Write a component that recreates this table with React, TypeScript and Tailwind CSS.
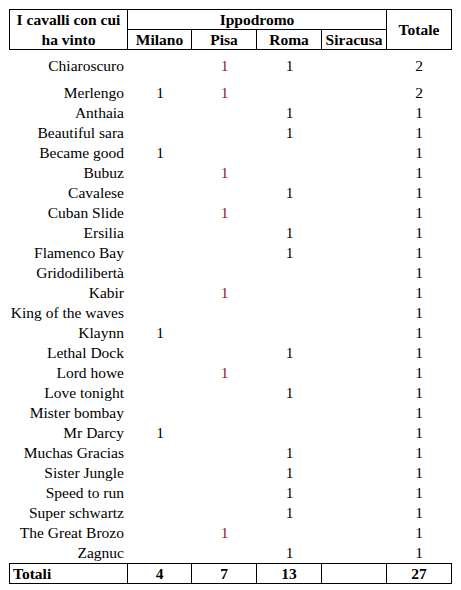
import React from "react";

type Row = [string, string, string, string, string, string];

const rows: Row[] = [
  ["Chiaroscuro", "", "1", "1", "", "2"],
  ["Merlengo", "1", "1", "", "", "2"],
  ["Anthaia", "", "", "1", "", "1"],
  ["Beautiful sara", "", "", "1", "", "1"],
  ["Became good", "1", "", "", "", "1"],
  ["Bubuz", "", "1", "", "", "1"],
  ["Cavalese", "", "", "1", "", "1"],
  ["Cuban Slide", "", "1", "", "", "1"],
  ["Ersilia", "", "", "1", "", "1"],
  ["Flamenco Bay", "", "", "1", "", "1"],
  ["Gridodilibertà", "", "", "", "", "1"],
  ["Kabir", "", "1", "", "", "1"],
  ["King of the waves", "", "", "", "", "1"],
  ["Klaynn", "1", "", "", "", "1"],
  ["Lethal Dock", "", "", "1", "", "1"],
  ["Lord howe", "", "1", "", "", "1"],
  ["Love tonight", "", "", "1", "", "1"],
  ["Mister bombay", "", "", "", "", "1"],
  ["Mr Darcy", "1", "", "", "", "1"],
  ["Muchas Gracias", "", "", "1", "", "1"],
  ["Sister Jungle", "", "", "1", "", "1"],
  ["Speed to run", "", "", "1", "", "1"],
  ["Super schwartz", "", "", "1", "", "1"],
  ["The Great Brozo", "", "1", "", "", "1"],
  ["Zagnuc", "", "", "1", "", "1"],
];

const cols = "grid grid-cols-[118px_64px_65px_65px_65px_64px]";

function rowHeight(i: number) {
  if (i === 0) return "h-[32px]";
  if (i === 1) return "h-[21px]";
  return "h-[20px]";
}

export default function App() {
  return (
    <div className="bg-white w-[461px] h-[590px] pt-[9px] pl-[9px] text-black font-['Liberation_Serif'] text-[15.5px] leading-[20px]">
      <div className="w-[443px]">
        {/* Header */}
        <div className={`${cols} grid-rows-[20px_19px] border border-black font-bold`}>
          <div className="row-span-2 border-r border-black flex flex-col items-center justify-center leading-[20px]">
            <span>I cavalli con cui</span>
            <span>ha vinto</span>
          </div>
          <div className="col-span-4 border-r border-b border-black flex items-center justify-center">
            Ippodromo
          </div>
          <div className="row-span-2 flex items-center justify-center">Totale</div>
          <div className="border-r border-black flex items-center justify-center">Milano</div>
          <div className="border-r border-black flex items-center justify-center">Pisa</div>
          <div className="border-r border-black flex items-center justify-center">Roma</div>
          <div className="border-r border-black flex items-center justify-center">Siracusa</div>
        </div>

        {/* Body */}
        <div className="px-[1px]">
          {rows.map((r, i) => (
            <div key={r[0]} className={`${cols} ${rowHeight(i)}`}>
              <div className="flex items-center justify-end pr-[4px] whitespace-nowrap">{r[0]}</div>
              <div className="flex items-center justify-center">{r[1]}</div>
              <div className="flex items-center justify-center text-[#991b1b]">{r[2]}</div>
              <div className="flex items-center justify-center">{r[3]}</div>
              <div className="flex items-center justify-center">{r[4]}</div>
              <div className="flex items-center justify-center">{r[5]}</div>
            </div>
          ))}
        </div>

        {/* Footer */}
        <div className={`${cols} h-[21px] border border-black font-bold`}>
          <div className="border-r border-black flex items-center pl-[3px]">Totali</div>
          <div className="border-r border-black flex items-center justify-center">4</div>
          <div className="border-r border-black flex items-center justify-center">7</div>
          <div className="border-r border-black flex items-center justify-center">13</div>
          <div className="border-r border-black"></div>
          <div className="flex items-center justify-center">27</div>
        </div>
      </div>
    </div>
  );
}
